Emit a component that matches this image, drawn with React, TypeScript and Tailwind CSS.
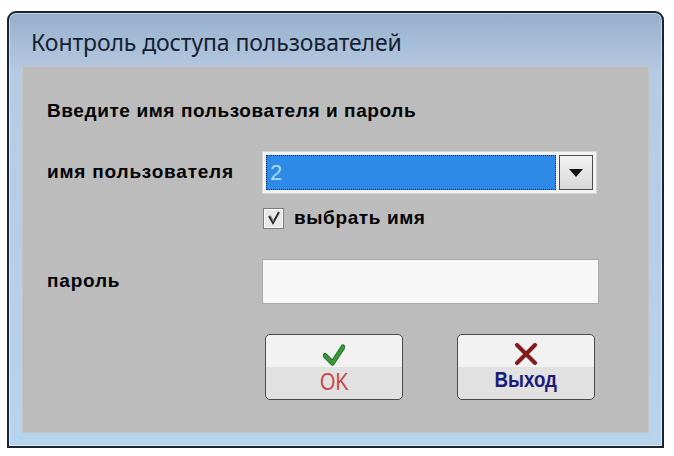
import React from "react";

function CheckIcon() {
  return (
    <svg width="22" height="22" viewBox="0 0 22 22">
      <path d="M2 11.5 L9.5 19 L20 3" fill="none" stroke="#1f6f24" strokeWidth="5" strokeLinecap="round" strokeLinejoin="round" />
      <path d="M2 11.5 L9.5 19 L20 3" fill="none" stroke="#3a9a3a" strokeWidth="3" strokeLinecap="round" strokeLinejoin="round" />
    </svg>
  );
}

function CrossIcon() {
  return (
    <svg width="24" height="22" viewBox="0 0 24 22">
      <path d="M3 2 L21 20 M21 2 L3 20" fill="none" stroke="#871b1b" strokeWidth="4" strokeLinecap="round" />
    </svg>
  );
}

function SmallCheck() {
  return (
    <svg width="14" height="14" viewBox="0 0 14 14">
      <path d="M2 5 L6 12 L12 1" fill="none" stroke="#2a2a2a" strokeWidth="2" />
      <path d="M3.5 4.5 L7 11" fill="none" stroke="#8a8a8a" strokeWidth="1" />
    </svg>
  );
}

export default function App() {
  return (
    <div className="w-[674px] h-[456px] bg-white overflow-hidden pt-[11px] pl-[7px]">
      <div className="w-[657px] h-[437px] border-2 border-[#1b252e] rounded-t-[9px] bg-linear-to-b from-[#96afca] via-[#b6cbe2] via-[14%] to-[#b6d4ec] shadow-[inset_0_0_0_1px_rgba(255,255,255,0.45)] flex flex-col">
        <div className="h-[53px] pl-[22px] flex items-center pt-[5px]">
          <span className="font-['Noto_Sans',sans-serif] text-[23px] leading-none text-[#162033] tracking-[-0.1px]">
            Контроль доступа пользователей
          </span>
        </div>
        <div className="mx-[13px] mb-[13px] flex-1 bg-[#bcbcbc] border border-[#c4c4c4] font-['Liberation_Sans',Arial,sans-serif] text-black flex flex-col pl-[24px]">
          <div className="mt-[32px] h-[24px] flex items-center text-[19px] font-bold tracking-[0.6px]">
            Введите имя пользователя и пароль
          </div>
          <div className="mt-[28px] flex items-center">
            <div className="w-[215px] text-[19px] font-bold tracking-[0.8px]">имя пользователя</div>
            <div className="w-[335px] h-[43px] bg-[#f3f3f3] border border-[#d6d6d6] p-[3px] flex gap-[3px]">
              <div className="flex-1 bg-[#2d8ae6] border border-dotted border-[#14243a] flex items-center pl-[3px]">
                <span className="text-[22px] text-[#a9dcf7] leading-none">2</span>
              </div>
              <div className="w-[34px] border border-[#4d4d4d] bg-linear-to-b from-[#f2f2f2] to-[#d8d8d8] flex items-center justify-center">
                <svg width="14" height="8" viewBox="0 0 14 8">
                  <path d="M0 0 L14 0 L7 8 Z" fill="#111" />
                </svg>
              </div>
            </div>
          </div>
          <div className="mt-[10px] ml-[216px] flex items-center gap-[10px]">
            <div className="w-[21px] h-[21px] border border-[#7c7c7c] bg-[#e9e9e9] shadow-[inset_0_0_0_1px_#f8f8f8] flex items-center justify-center">
              <SmallCheck />
            </div>
            <span className="text-[19px] font-bold tracking-[0.6px]">выбрать имя</span>
          </div>
          <div className="mt-[26px] flex items-center">
            <div className="w-[215px] text-[19px] font-bold tracking-[0.8px]">пароль</div>
            <div className="w-[337px] h-[45px] bg-[#f7f7f7] border border-[#a9a9a9]" />
          </div>
          <div className="mt-[30px] ml-[218px] flex gap-[54px]">
            <button className="w-[138px] h-[66px] rounded-[5px] border border-[#4a4a4a] bg-linear-to-b from-[#f2f2f2] from-50% to-[#e1e1e1] to-50% flex flex-col items-center pt-[9px]">
              <CheckIcon />
              <span className="mt-[4px] text-[24px] leading-none text-[#c94646] scale-x-[0.82] font-['Liberation_Sans',sans-serif]">OK</span>
            </button>
            <button className="w-[138px] h-[66px] rounded-[5px] border border-[#4a4a4a] bg-linear-to-b from-[#f2f2f2] from-50% to-[#e1e1e1] to-50% flex flex-col items-center pt-[8px]">
              <CrossIcon />
              <span className="mt-[4px] text-[22px] leading-none text-[#1b1b7a] font-bold scale-x-[0.85] font-['Liberation_Sans',sans-serif]">Выход</span>
            </button>
          </div>
        </div>
      </div>
    </div>
  );
}
